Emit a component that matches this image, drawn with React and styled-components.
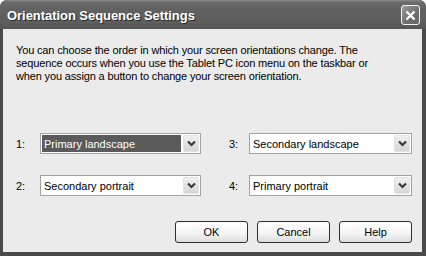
import React from 'react';
import styled, { createGlobalStyle } from 'styled-components';

const GlobalStyle = createGlobalStyle`
  html, body {
    margin: 0;
    padding: 0;
    background: #ffffff;
  }
  body {
    font-family: "Liberation Sans", Arial, sans-serif;
    font-size: 11px;
    color: #000;
  }
`;

const Window = styled.div`
  width: 426px;
  height: 256px;
  box-sizing: border-box;
  display: flex;
  flex-direction: column;
  background: #4a4a4a;
  border-radius: 7px 7px 0 0;
  overflow: hidden;
`;

const TitleBar = styled.div`
  height: 29px;
  flex: none;
  display: flex;
  align-items: center;
  justify-content: space-between;
  padding: 0 6px 0 7px;
  background: linear-gradient(#8a8a8a 0, #6c6c6c 2px, #626262 8px, #5e5e5e 22px, #555 29px);
`;

const Title = styled.span`
  color: #fff;
  font-family: "Liberation Sans", Arial, sans-serif;
  font-weight: bold;
  font-size: 13px;
  letter-spacing: -0.05px;
  text-shadow: 1px 1px 0 #2a2a2a;
  margin-top: 1px;
`;

const CloseButton = styled.div`
  width: 19px;
  height: 20px;
  box-sizing: border-box;
  border: 1px solid #f4f4f4;
  border-radius: 3px;
  background: linear-gradient(135deg, #9a9a9a, #6e6e6e 60%, #666);
  display: flex;
  align-items: center;
  justify-content: center;
  margin-top: 1px;
`;

const Frame = styled.div`
  flex: 1;
  display: flex;
  padding: 0 5px 4px 3px;
`;

const Body = styled.div`
  flex: 1;
  display: flex;
  flex-direction: column;
  background: #ebebeb;
  padding: 15px 10px 9px 13px;
`;

const Description = styled.p`
  margin: 0;
  line-height: 13px;
  letter-spacing: -0.15px;
  width: 380px;
`;

const Choices = styled.div`
  display: grid;
  grid-template-columns: 185px 183px;
  column-gap: 28px;
  row-gap: 21px;
  margin-top: 50px;
`;

const Field = styled.div`
  display: flex;
  align-items: center;
`;

const Label = styled.span`
  width: ${p => p.$width}px;
  flex: none;
`;

const Select = styled.div`
  flex: 1;
  height: 21px;
  box-sizing: border-box;
  border: 1px solid #a3a3a3;
  background: #fff;
  display: flex;
  align-items: stretch;
  padding: 1px;
`;

const Value = styled.div`
  flex: 1;
  display: flex;
  align-items: center;
  padding-left: 2px;
  margin-right: 2px;
  background: ${p => (p.$selected ? '#5a5a5a' : 'transparent')};
  color: ${p => (p.$selected ? '#fff' : '#000')};
`;

const ArrowButton = styled.div`
  width: 16px;
  flex: none;
  border-radius: 2px;
  background: linear-gradient(#f0f0f0, #d6d6d6);
  border: 1px solid #e2e2e2;
  box-sizing: border-box;
  display: flex;
  align-items: center;
  justify-content: center;
`;

const Actions = styled.div`
  margin-top: auto;
  display: flex;
  justify-content: flex-end;
  gap: 9px;
`;

const Button = styled.button`
  width: 73px;
  height: 22px;
  border: 1px solid #2e2e2e;
  border-radius: 3px;
  background: linear-gradient(#ffffff, #f4f4f4 60%, #dcdcdc);
  font-family: "Liberation Sans", Arial, sans-serif;
  font-size: 11px;
  color: #000;
  padding: 0;
`;

const Chevron = () => (
  <svg width="9" height="7" viewBox="0 0 9 7">
    <path d="M1 1.5 L4.5 5 L8 1.5" fill="none" stroke="#3a3a3a" strokeWidth="2.2" />
  </svg>
);

const CloseIcon = () => (
  <svg width="11" height="11" viewBox="0 0 11 11">
    <path d="M1.5 1.5 L9.5 9.5 M9.5 1.5 L1.5 9.5" stroke="#fff" strokeWidth="2.2" />
  </svg>
);

const Dropdown = ({ label, labelWidth, value, selected }) => (
  <Field>
    <Label $width={labelWidth}>{label}</Label>
    <Select>
      <Value $selected={selected}>{value}</Value>
      <ArrowButton>
        <Chevron />
      </ArrowButton>
    </Select>
  </Field>
);

const App = () => (
  <>
    <GlobalStyle />
    <Window>
      <TitleBar>
        <Title>Orientation Sequence Settings</Title>
        <CloseButton>
          <CloseIcon />
        </CloseButton>
      </TitleBar>
      <Frame>
        <Body>
          <Description>
            You can choose the order in which your screen orientations change. The
            sequence occurs when you use the Tablet PC icon menu on the taskbar or
            when you assign a button to change your screen orientation.
          </Description>
          <Choices>
            <Dropdown label="1:" labelWidth={24} value="Primary landscape" selected />
            <Dropdown label="3:" labelWidth={20} value="Secondary landscape" />
            <Dropdown label="2:" labelWidth={24} value="Secondary portrait" />
            <Dropdown label="4:" labelWidth={20} value="Primary portrait" />
          </Choices>
          <Actions>
            <Button>OK</Button>
            <Button>Cancel</Button>
            <Button>Help</Button>
          </Actions>
        </Body>
      </Frame>
    </Window>
  </>
);

export default App;
